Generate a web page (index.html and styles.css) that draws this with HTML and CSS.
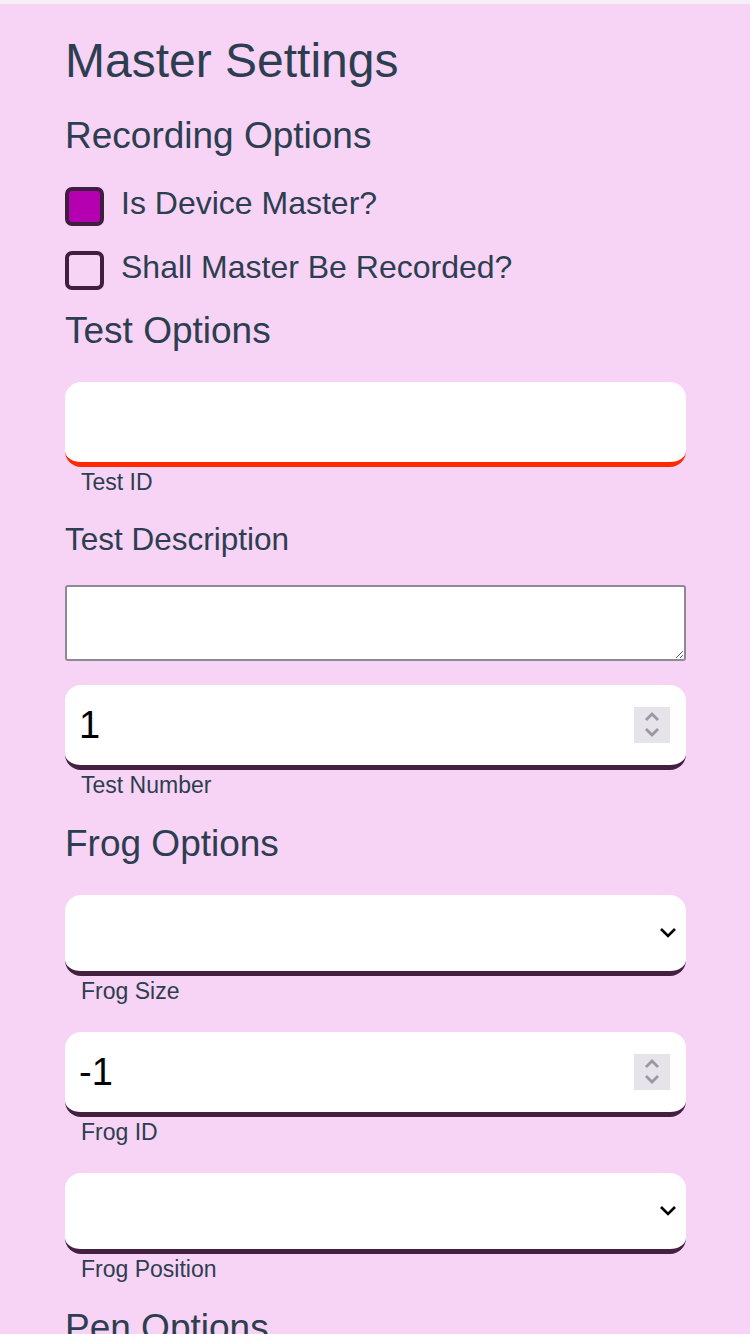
FILE: index.html
```html
<!DOCTYPE html>
<html lang="en">
<head>
<meta charset="utf-8">
<title>Master Settings</title>
<link rel="stylesheet" href="styles.css">
</head>
<body>
<div class="topbar"></div>
<main class="page">
  <h1 class="title">Master Settings</h1>

  <h2 class="section">Recording Options</h2>
  <label class="check-row">
    <input class="check-input" type="checkbox" checked>
    <span class="check-box"></span>
    <span class="check-text">Is Device Master?</span>
  </label>
  <label class="check-row">
    <input class="check-input" type="checkbox">
    <span class="check-box"></span>
    <span class="check-text">Shall Master Be Recorded?</span>
  </label>

  <h2 class="section">Test Options</h2>
  <div class="field">
    <div class="control control-invalid">
      <input class="control-input" type="text" aria-label="Test ID">
    </div>
    <span class="field-label">Test ID</span>
  </div>

  <div class="plain-label">Test Description</div>
  <textarea class="textarea" aria-label="Test Description"></textarea>

  <div class="field">
    <div class="control">
      <input class="control-input" type="text" value="1" aria-label="Test Number">
      <span class="spinner">
        <svg width="36" height="36" viewBox="0 0 36 36"><polyline points="12,13 18,7 24,13" /><polyline points="12,22 18,28 24,22" /></svg>
      </span>
    </div>
    <span class="field-label">Test Number</span>
  </div>

  <h2 class="section">Frog Options</h2>
  <div class="field">
    <div class="control control-select">
      <select class="control-input" aria-label="Frog Size"><option></option></select>
      <svg class="chevron" width="18" height="12" viewBox="0 0 18 12"><polyline points="2,2 9,9 16,2" /></svg>
    </div>
    <span class="field-label">Frog Size</span>
  </div>

  <div class="field">
    <div class="control">
      <input class="control-input" type="text" value="-1" aria-label="Frog ID">
      <span class="spinner">
        <svg width="36" height="36" viewBox="0 0 36 36"><polyline points="12,13 18,7 24,13" /><polyline points="12,22 18,28 24,22" /></svg>
      </span>
    </div>
    <span class="field-label">Frog ID</span>
  </div>

  <div class="field">
    <div class="control control-select">
      <select class="control-input" aria-label="Frog Position"><option></option></select>
      <svg class="chevron" width="18" height="12" viewBox="0 0 18 12"><polyline points="2,2 9,9 16,2" /></svg>
    </div>
    <span class="field-label">Frog Position</span>
  </div>

  <h2 class="section">Pen Options</h2>
</main>
</body>
</html>
```

FILE: styles.css
```css
* { box-sizing: border-box; }

html, body {
  margin: 0;
  padding: 0;
}

body {
  background: #f7d3f5;
  font-family: "Liberation Sans", Arial, Helvetica, sans-serif;
  color: #2c3e50;
  overflow: hidden;
  height: 1334px;
}

.topbar {
  height: 4px;
  background: #f3eff3;
}

.page {
  display: flex;
  flex-direction: column;
  padding: 0 64px 0 65px;
}

.title {
  margin: 29px 0 0;
  font-size: 48px;
  line-height: 56px;
  font-weight: 400;
}

.section {
  margin: 25px 0 0;
  font-size: 37px;
  line-height: 42px;
  font-weight: 400;
}

.title + .section { margin-top: 26px; }
.check-row + .section { margin-top: 20px; }

.check-row {
  display: flex;
  align-items: flex-start;
  margin-top: 21px;
}

.section + .check-row { margin-top: 26px; }

.check-input {
  position: absolute;
  opacity: 0;
  width: 0;
  height: 0;
  margin: 0;
}

.check-box {
  flex: none;
  width: 39px;
  height: 39px;
  margin-top: 4px;
  margin-right: 17px;
  border: 4px solid #3f1f3d;
  border-radius: 7px;
}

.check-input:checked + .check-box {
  background: #b400b0;
}

.check-text {
  margin-top: 2px;
  font-size: 32px;
  line-height: 37px;
}

.field {
  display: flex;
  flex-direction: column;
  margin-top: 24px;
}

.section + .field { margin-top: 30px; }
.field + .field { margin-top: 28px; }

.control {
  display: flex;
  align-items: center;
  height: 85px;
  background: #ffffff;
  border-radius: 16px;
  border-bottom: 5px solid #43203f;
}

.control-select {
  height: 81px;
}

.control-invalid {
  border-bottom-color: #ff2a00;
}

.control-input {
  flex: 1;
  min-width: 0;
  height: 100%;
  border: 0;
  outline: 0;
  background: transparent;
  padding: 0 0 0 14px;
  margin: 0;
  font-family: "Liberation Sans", Arial, sans-serif;
  font-size: 38px;
  color: #000000;
  appearance: none;
  -webkit-appearance: none;
}

.spinner {
  flex: none;
  width: 36px;
  height: 36px;
  margin-right: 16px;
  background: #e6e3ea;
}

.spinner svg {
  display: block;
  fill: none;
  stroke: #9b96a3;
  stroke-width: 2.8;
}

.chevron {
  flex: none;
  margin-right: 9px;
  fill: none;
  stroke: #000000;
  stroke-width: 2.6;
}

.field-label {
  margin-top: 2px;
  padding-left: 16px;
  font-size: 23px;
  line-height: 26px;
}

.plain-label {
  margin-top: 26px;
  font-size: 31.5px;
  line-height: 36px;
}

.textarea {
  display: block;
  margin: 28px 0 0;
  height: 76px;
  width: 100%;
  border: 2px solid #8e8a95;
  border-radius: 3px;
  background: #ffffff;
  font-family: "Liberation Sans", Arial, sans-serif;
  font-size: 20px;
  outline: 0;
}
```
